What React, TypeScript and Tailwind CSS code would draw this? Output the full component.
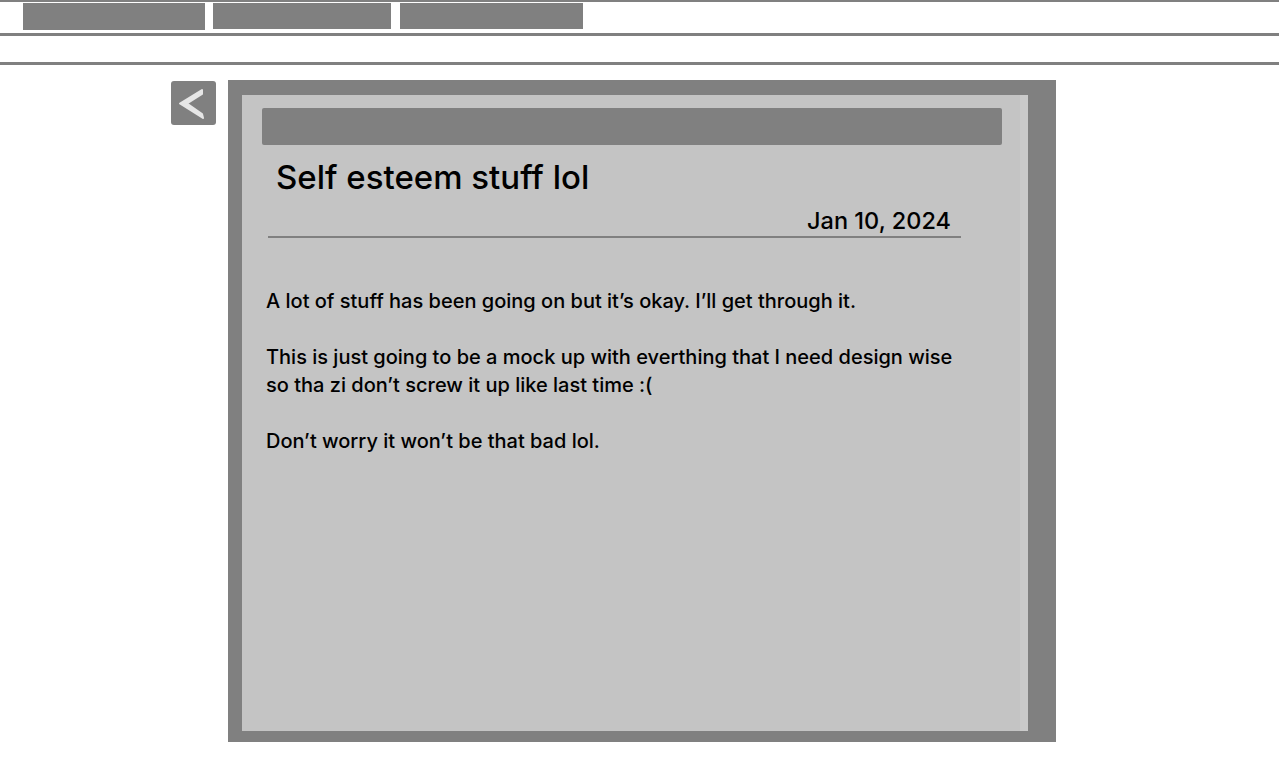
import React from 'react';

const font = { fontFamily: 'Inter, "Noto Sans", sans-serif' };

function BackButton() {
  return (
    <button className="mt-[1px] flex h-[44px] w-[45px] items-center justify-center rounded-[3px] bg-[#808080]">
      <svg width="45" height="44" viewBox="0 0 45 44">
        <path d="M31 9 L9 22.5 L32 37 L31 33 L16 22.5 L31 13 Z" fill="#e6e6e6" stroke="#e6e6e6" strokeWidth="2" strokeLinejoin="round" />
      </svg>
    </button>
  );
}

export default function App() {
  return (
    <div className="min-h-[772px] w-full bg-white" style={font}>
      {/* nav */}
      <div className="h-[2px] bg-[#808080]" />
      <div className="flex h-[31px] items-start gap-[8px] pl-[23px] pt-[1px]">
        <div className="h-[27px] w-[182px] bg-[#808080]" />
        <div className="h-[26px] w-[178px] bg-[#808080]" />
        <div className="ml-[1px] h-[26px] w-[183px] bg-[#808080]" />
      </div>
      <div className="h-[3px] bg-[#808080]" />
      <div className="h-[26px]" />
      <div className="h-[3px] bg-[#808080]" />

      {/* entry */}
      <div className="flex gap-[12px] pl-[171px] pt-[15px]">
        <BackButton />
        <div className="flex h-[662px] w-[828px] bg-[#808080] pb-[11px] pl-[14px] pr-[28px] pt-[15px]">
          <div className="flex flex-1 bg-[#c4c4c4]">
            <div className="flex flex-1 flex-col pt-[13px]">
              <div className="ml-[20px] h-[37px] w-[740px] rounded-[2px] bg-[#808080]" />
              <h1 className="ml-[34px] mt-[12px] text-[33px] font-medium leading-[40px] text-black">
                Self esteem stuff lol
              </h1>
              <div className="ml-[26px] w-[693px]">
                <div className="mt-[10px] pr-[10px] text-right text-[23.5px] font-medium leading-[28px] text-black">
                  Jan 10, 2024
                </div>
                <div className="mt-[1px] h-[2px] bg-[#808080]" />
              </div>
              <div className="ml-[24px] mt-[49px] space-y-[28px] text-[20px] font-medium leading-[28px] text-black">
                <p>A lot of stuff has been going on but it’s okay. I’ll get through it.</p>
                <p>
                  This is just going to be a mock up with everthing that I need design wise
                  <br />
                  so tha zi don’t screw it up like last time :(
                </p>
                <p>Don’t worry it won’t be that bad lol.</p>
              </div>
            </div>
            <div className="w-[8px] bg-[#cacaca]" />
          </div>
        </div>
      </div>
    </div>
  );
}
